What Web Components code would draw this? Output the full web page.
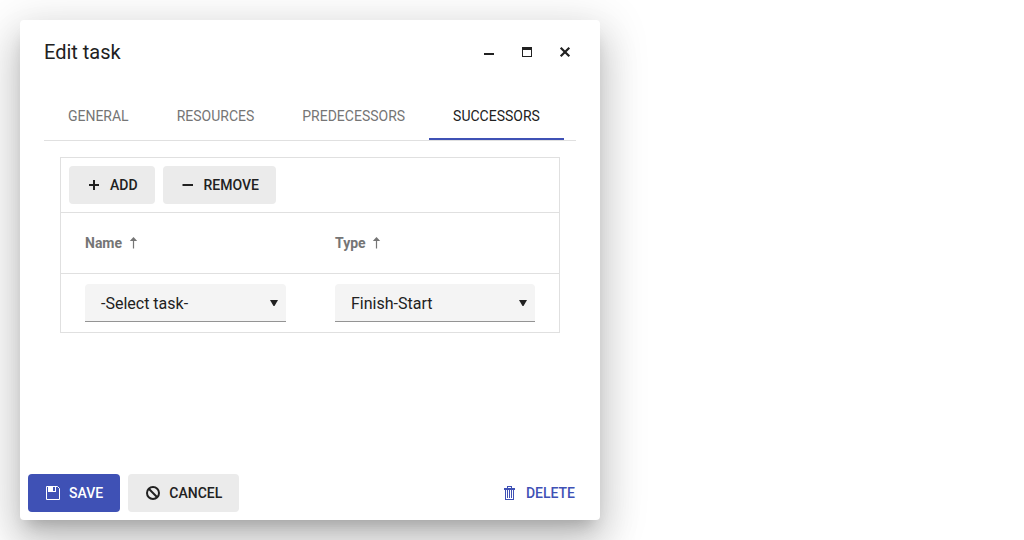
<!DOCTYPE html>
<html lang="en">
<head>
<meta charset="utf-8">
<title>Edit task</title>
<style>
html,body{margin:0;height:100%;overflow:hidden;background:#fff}
body{font:14px/20px Roboto,"Liberation Sans",sans-serif;color:#212121;box-sizing:border-box;padding:20px}
</style>
</head>
<body>
<task-window heading="Edit task">
  <tab-strip slot="tabs">
    <tab-item style="width:108.6px">GENERAL</tab-item>
    <tab-item style="width:125.8px">RESOURCES</tab-item>
    <tab-item style="width:150.6px">PREDECESSORS</tab-item>
    <tab-item style="width:135px" selected>SUCCESSORS</tab-item>
  </tab-strip>
  <link-grid>
    <ui-button slot="tools" icon="plus" style="width:86px">ADD</ui-button>
    <ui-button slot="tools" icon="minus" style="width:113px;padding-left:17.5px">REMOVE</ui-button>
    <column-head slot="head">Name</column-head>
    <column-head slot="head" style="gap:6.500px">Type</column-head>
    <drop-down slot="cells" style="width:201px">-Select task-</drop-down>
    <drop-down slot="cells" style="width:200px">Finish-Start</drop-down>
  </link-grid>
  <ui-button slot="footer" icon="save" kind="primary" style="width:92px">SAVE</ui-button>
  <ui-button slot="footer" icon="cancel" style="width:111px;gap:9.3px">CANCEL</ui-button>
  <ui-button slot="footer" icon="trash" kind="flat" style="width:107px;margin-left:auto;gap:8.9px">DELETE</ui-button>
</task-window>
<script>
const icons = {
  minimize: '<path d="M2 8h10v2H2z"/>',
  maximize: '<path d="M2 2h10v10H2zM3 5v6h8V5z" fill-rule="evenodd"/>',
  close: '<path d="M2.700 2.700l8.600 8.600M11.300 2.700l-8.600 8.600" stroke="currentColor" stroke-width="2.2" fill="none"/>',
  plus: '<path d="M6 2h2v4h4v2H8v4H6V8H2V6h4z"/>',
  minus: '<path d="M1.500 6h10.500v2H1.500z"/>',
  save: '<path d="M.5.5h11l2 2v11H.5z" fill="none" stroke="currentColor"/><path d="M2 0h8v6H2zM7 1v4h2V1z" fill-rule="evenodd"/>',
  cancel: '<circle cx="7" cy="7" r="6" fill="none" stroke="currentColor" stroke-width="2"/><path d="M2.8 2.8l8.4 8.4" stroke="currentColor" stroke-width="2"/>',
  trash: '<path d="M4 0h5v2h3v2h-1v10H2V4H1V2h3zM5 1v1h3V1zM3 4v9h7V4z" fill-rule="evenodd"/><path d="M4 4h1v8H4zM6 4h1v8H6zM8 4h1v8H8z"/>'
};
const icon = name => `<svg width="14" height="14" viewBox="0 0 14 14" fill="currentColor" aria-hidden="true">${icons[name]}</svg>`;

function define(name, render) {
  customElements.define(name, class extends HTMLElement {
    constructor() {
      super();
      this.attachShadow({mode: 'open'}).innerHTML = render(this);
    }
  });
}

define('task-window', el => `<style>
:host{display:flex;flex-direction:column;width:580px;height:500px;background:#fff;border-radius:4px;
  box-shadow:0 11px 15px -7px rgba(0,0,0,.2),0 24px 38px 3px rgba(0,0,0,.14),0 9px 46px 8px rgba(0,0,0,.12)}
header{display:flex;align-items:center;height:64px;padding:0 28px 0 24px;box-sizing:border-box}
h1{font-size:20px;line-height:24px;font-weight:400;margin:0 auto 0 0}
nav{display:flex;gap:24px}
svg{display:block}
main{flex:1;padding:8px 24px 0}
footer{display:flex;gap:8px;padding:8px}
</style>
<header><h1>${el.getAttribute('heading')}</h1><nav>${icon('minimize')}${icon('maximize')}${icon('close')}</nav></header>
<main><slot name="tabs"></slot><slot></slot></main>
<footer><slot name="footer"></slot></footer>`);

define('tab-strip', () => `<style>
:host{display:flex;height:49px;box-sizing:border-box;border-bottom:1px solid #e0e0e0}
</style><slot></slot>`);

define('tab-item', () => `<style>
:host{display:flex;align-items:center;justify-content:center;box-sizing:border-box;color:#757575;border-bottom:2px solid transparent;padding-top:2px}
:host([selected]){color:#212121;border-color:#3f51b5}
</style><slot></slot>`);

define('link-grid', () => `<style>
:host{display:block;margin:16px;border:1px solid #e0e0e0}
.tools{display:flex;gap:8px;padding:8px;border-bottom:1px solid #e0e0e0}
.head,.cells{display:grid;grid-template-columns:250px auto;padding-left:24px}
.head{height:60px;align-items:center;border-bottom:1px solid #e0e0e0}
.cells{padding-top:10px;padding-bottom:10px}
</style>
<div class="tools"><slot name="tools"></slot></div>
<div class="head"><slot name="head"></slot></div>
<div class="cells"><slot name="cells"></slot></div>`);

define('column-head', () => `<style>
:host{display:flex;align-items:center;gap:7px;color:#757575;font-weight:700}
</style><slot></slot><svg width="9" height="12" viewBox="0 0 9 12" fill="currentColor"><path d="M3.900 3h1.200v8.500H3.900z"/><path d="M4.500 0L8.200 4H.8z"/></svg>`);

define('drop-down', () => `<style>
:host{display:flex;align-items:center;justify-content:space-between;height:38px;box-sizing:border-box;padding:1px 8px 0 16px;
  background:#f4f4f4;border-bottom:1px solid #949494;border-radius:4px 4px 0 0;font-size:16px}
span{padding-top:2px}
svg{margin-top:-1px}
</style><span><slot></slot></span><svg width="8" height="6" viewBox="0 0 8 6" fill="currentColor"><path d="M0 0h8L4.500 6h-1z"/></svg>`);

define('ui-button', el => `<style>
:host{display:flex;align-items:center;gap:9px;height:38px;box-sizing:border-box;padding-left:18px;
  background:#ebebeb;border-radius:4px;font-weight:500}
:host([kind=primary]){background:#3f51b5;color:#fff}
:host([kind=flat]){background:none;color:#3f51b5}
</style>${icon(el.getAttribute('icon'))}<span><slot></slot></span>`);
</script>
</body>
</html>
